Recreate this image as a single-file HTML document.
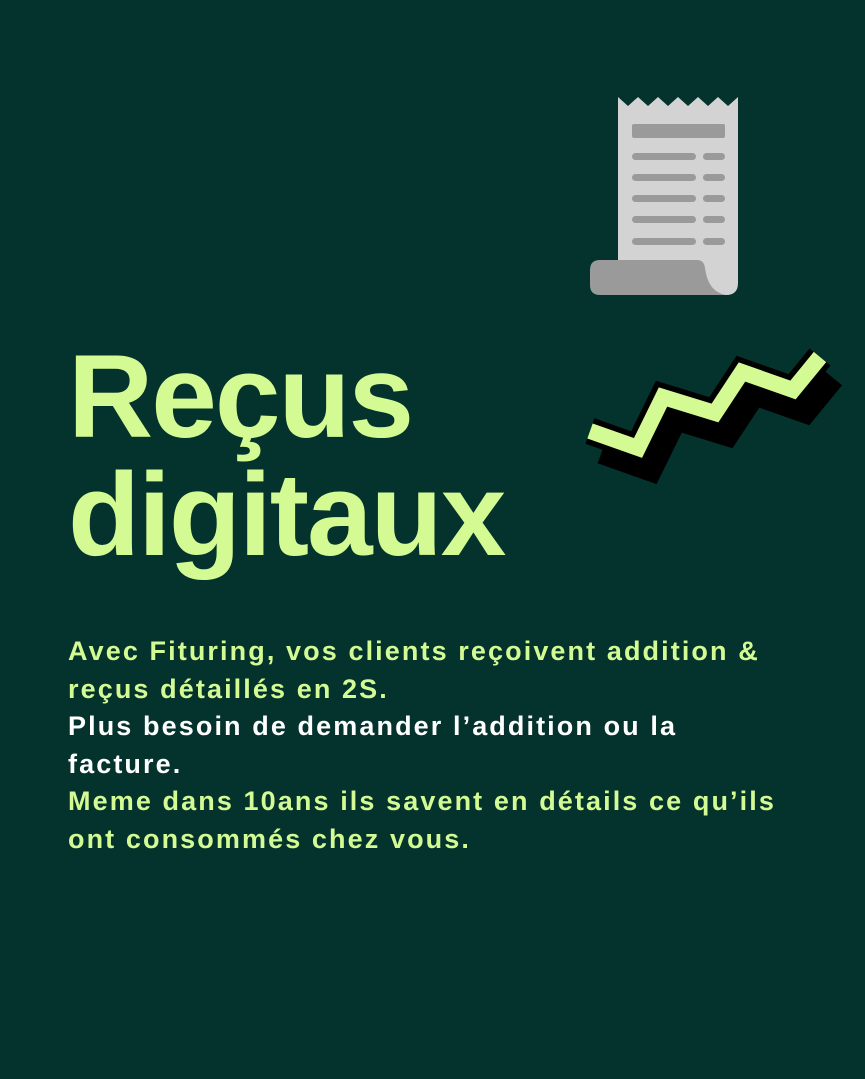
<!DOCTYPE html>
<html><head><meta charset="utf-8"><style>
html,body{margin:0;padding:0}
body{width:865px;height:1079px;background:#03332c;position:relative;overflow:hidden;font-family:"Liberation Sans",sans-serif}
.t{position:absolute;left:68px;color:#d4fa94;font-weight:bold;font-size:118px;letter-spacing:-2px;line-height:118px;top:338px;margin:0}
.p{position:absolute;left:68px;top:633px;width:800px;font-weight:bold;font-size:27px;letter-spacing:2.1px;line-height:37.5px;color:#d4fa94}
.w{color:#fff}
</style></head><body>
<svg width="865" height="1079" style="position:absolute;left:0;top:0">
<path d="M618 97 L628 106 L638 97 L648 106 L658 97 L668 106 L678 97 L688 106 L698 97 L708 106 L718 97 L728 106 L738 97 L738 283 Q738 295 726 295 L620 295 L618 260 Z" fill="#d3d3d3"/>
<path d="M600 260 L697 260 Q704 260 705 268 Q708 292 726 295 L600 295 Q590 295 590 285 L590 270 Q590 260 600 260 Z" fill="#9a9a9a"/>
<rect x="632" y="124" width="93" height="14" rx="2" fill="#9a9a9a"/>
<g fill="#9a9a9a">
<rect x="632" y="153" width="64" height="7" rx="3.5"/><rect x="703" y="153" width="22" height="7" rx="3.5"/>
<rect x="632" y="174" width="64" height="7" rx="3.5"/><rect x="703" y="174" width="22" height="7" rx="3.5"/>
<rect x="632" y="195" width="64" height="7" rx="3.5"/><rect x="703" y="195" width="22" height="7" rx="3.5"/>
<rect x="632" y="216" width="64" height="7" rx="3.5"/><rect x="703" y="216" width="22" height="7" rx="3.5"/>
<rect x="632" y="238" width="64" height="7" rx="3.5"/><rect x="703" y="238" width="22" height="7" rx="3.5"/>
</g>
<polyline points="602,451 650,468 675,417 727,433 754,392 805,410 832,377" fill="none" stroke="#000" stroke-width="26" stroke-linejoin="miter"/>
<polyline points="590,431 638,448 663,397 715,413 742,372 793,390 820,357" fill="none" stroke="#000" stroke-width="27" stroke-linejoin="miter"/>
<polyline points="590,431 638,448 663,397 715,413 742,372 793,390 820,357" fill="none" stroke="#d4fa94" stroke-width="16" stroke-linejoin="miter"/>
</svg>
<div class="t">Reçus<br>digitaux</div>
<div class="p">Avec Fituring, vos clients reçoivent addition &amp;<br>reçus détaillés en 2S.<br><span class="w">Plus besoin de demander l’addition ou la<br>facture.</span><br>Meme dans 10ans ils savent en détails ce qu’ils<br>ont consommés chez vous.</div>
</body></html>
